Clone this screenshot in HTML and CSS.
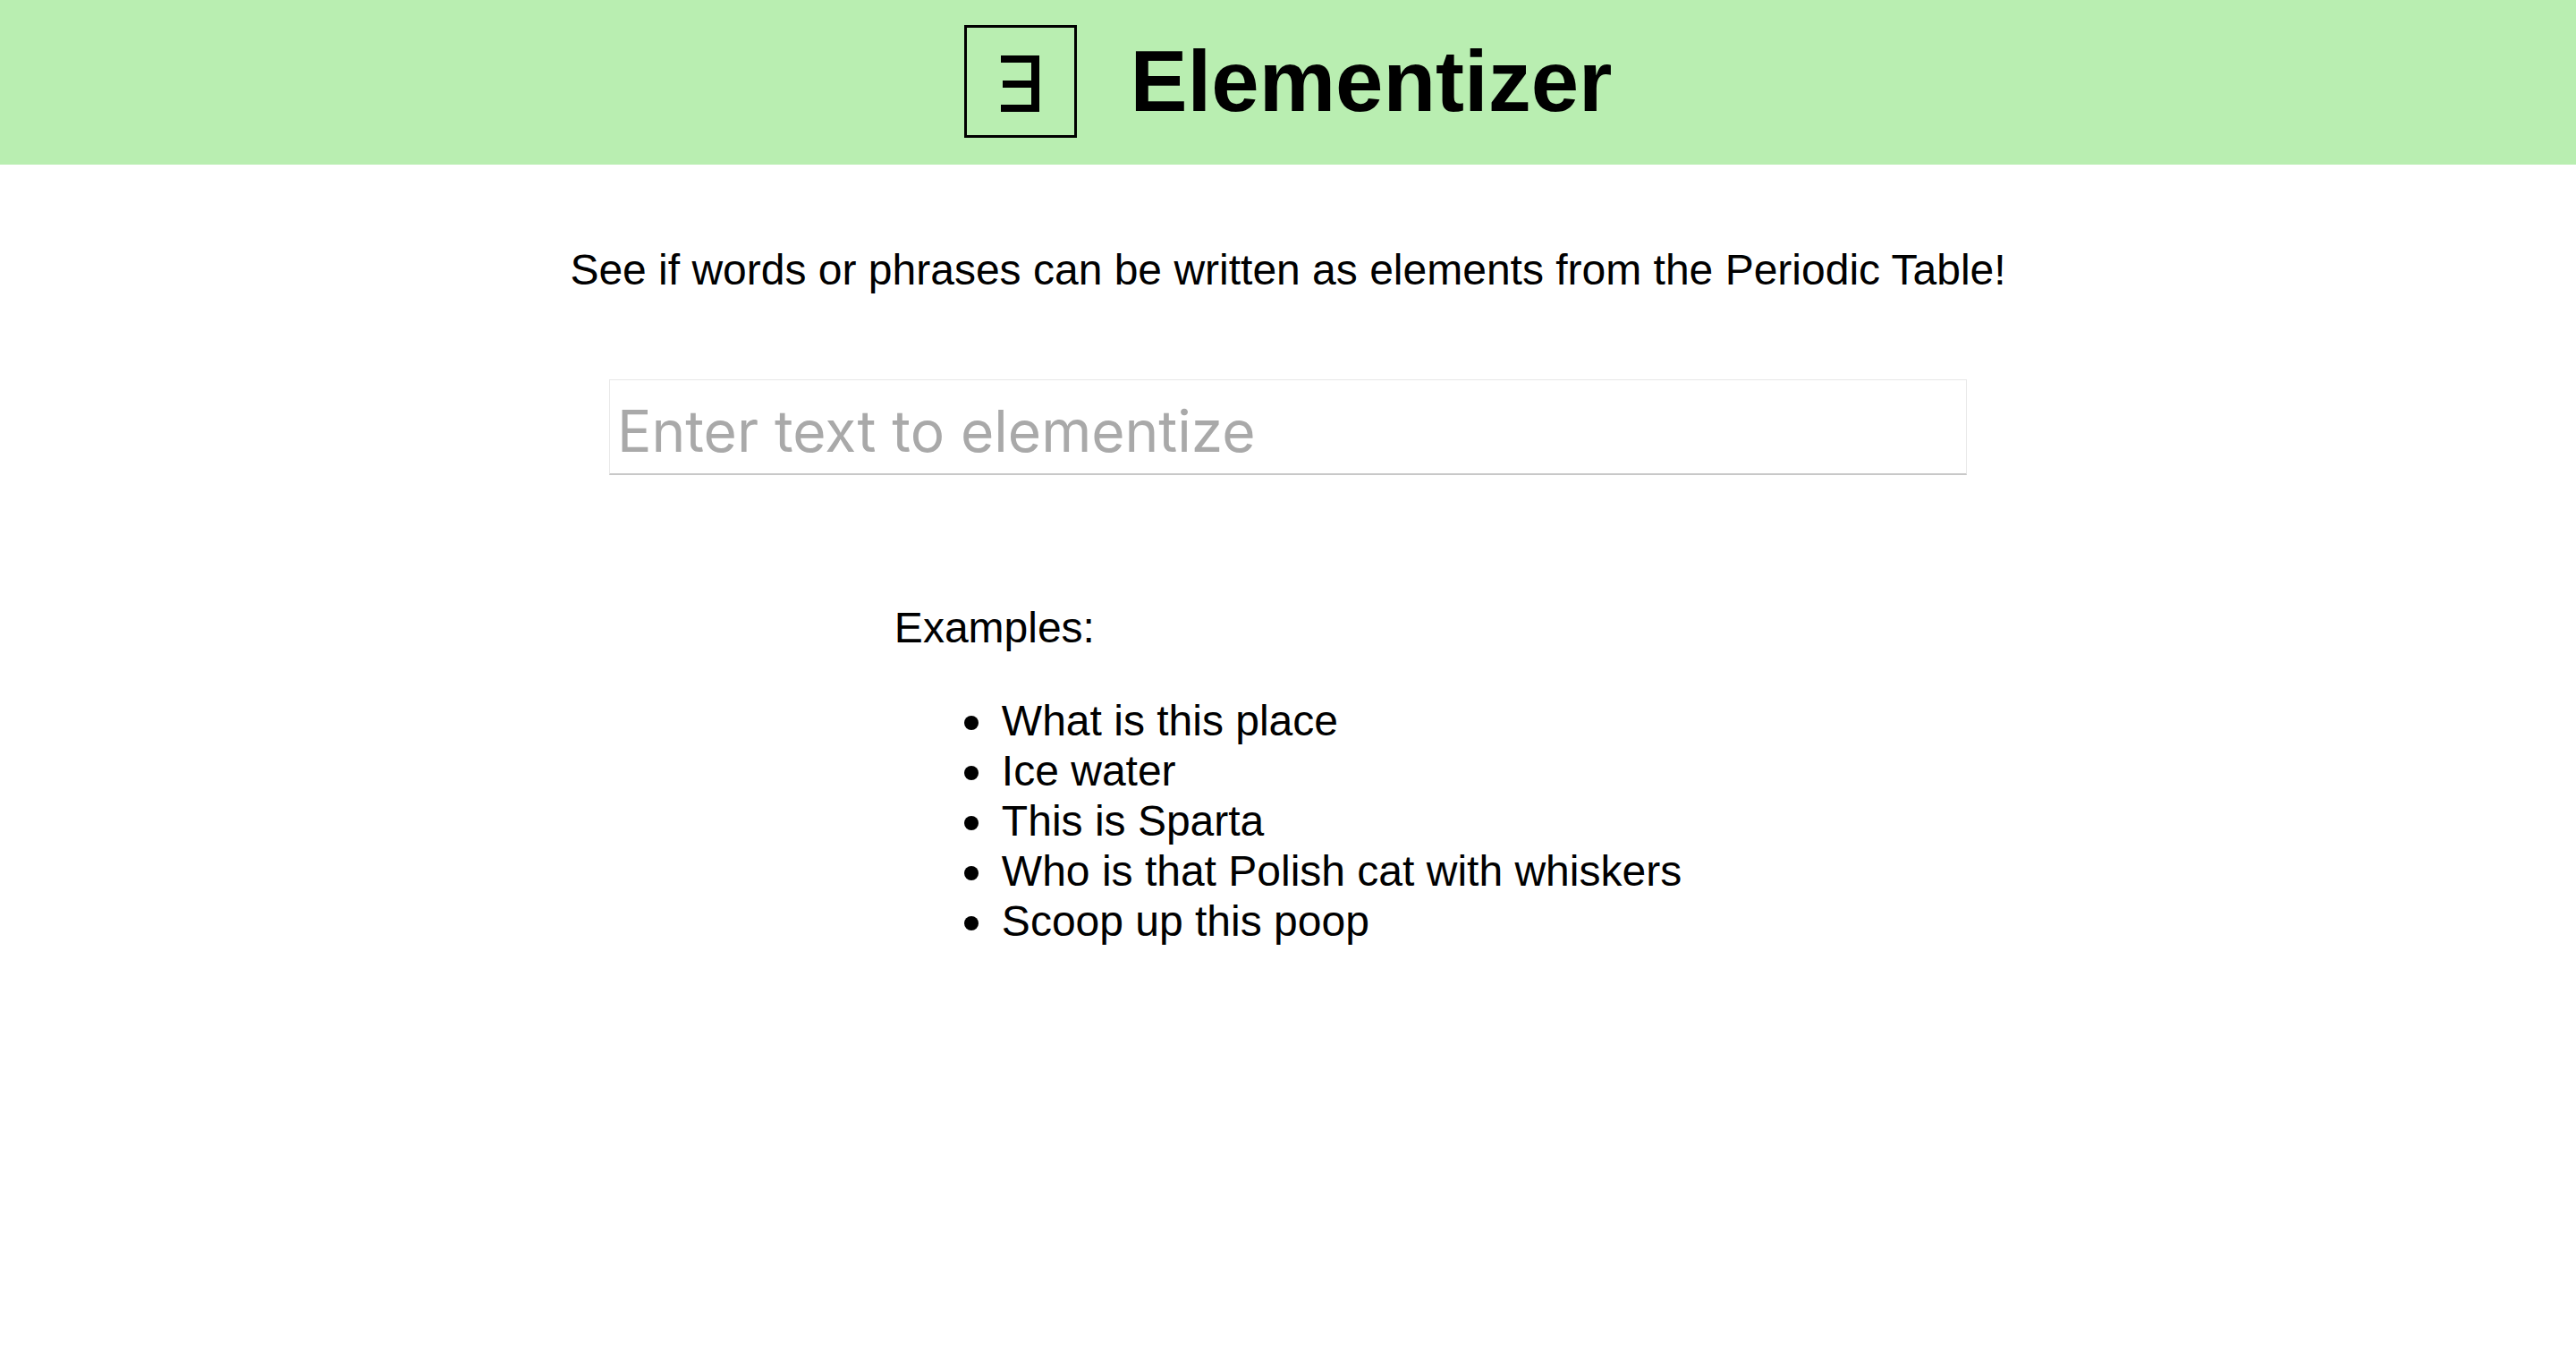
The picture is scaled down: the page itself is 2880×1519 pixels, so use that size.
FILE: index.html
```html
<!DOCTYPE html>
<html lang="en">
<head>
<meta charset="utf-8">
<title>Elementizer</title>
<link rel="stylesheet" href="styles.css">
</head>
<body>
<header class="banner">
  <svg class="logo" viewBox="0 0 126 126" aria-hidden="true">
    <rect class="frame" x="1.5" y="1.5" width="123" height="123"/>
    <path d="M41 34H84V97H41V89H75V70H43V62H75V42H41Z"/>
  </svg>
  <h1 class="title">Elementizer</h1>
</header>
<main class="content">
  <p class="intro"><label for="phrase">See if words or phrases can be written as elements from the Periodic Table!</label></p>
  <input class="phrase" id="phrase" type="text" placeholder="Enter text to elementize">
  <section class="examples">
    <p class="heading">Examples:</p>
    <ul class="list">
      <li>What is this place</li>
      <li>Ice water</li>
      <li>This is Sparta</li>
      <li>Who is that Polish cat with whiskers</li>
      <li>Scoop up this poop</li>
    </ul>
  </section>
</main>
</body>
</html>
```
FILE: styles.css
```css
body {
  margin: 0;
  background: #fff;
  color: #000;
  font: 48px/56px "Liberation Sans", Arial, sans-serif;
}
.banner {
  display: flex;
  justify-content: center;
  align-items: center;
  gap: 60px;
  padding: 28px 0 30px;
  background: #b9eeb1;
}
.logo {
  width: 126px;
  height: 126px;
}
.frame {
  fill: none;
  stroke: #000;
  stroke-width: 3;
}
.title {
  margin: 0;
  font-size: 96px;
  line-height: 110px;
}
.content {
  display: flex;
  flex-direction: column;
  align-items: center;
}
.intro { margin: 90px 0 94px; }
.phrase {
  box-sizing: border-box;
  width: 1518px;
  max-width: 100%;
  height: 107px;
  padding: 12px 8px 4px;
  border: 1px solid #e8e8e8;
  border-bottom: 2px solid #c8c8c8;
  font: 64px "Inter", sans-serif;
}
.phrase::placeholder { color: #a9a9a9; opacity: 1; }
.examples { margin-top: 95px; }
.heading { margin: 48px 0; }
.list {
  margin: 0;
  padding-left: 78px;
  list-style: none;
}
.list li {
  display: flex;
  align-items: center;
  gap: 26px;
}
.list li::before {
  content: "";
  flex: none;
  width: 16px;
  height: 16px;
  margin-top: 4px;
  border-radius: 50%;
  background: #000;
}
```
